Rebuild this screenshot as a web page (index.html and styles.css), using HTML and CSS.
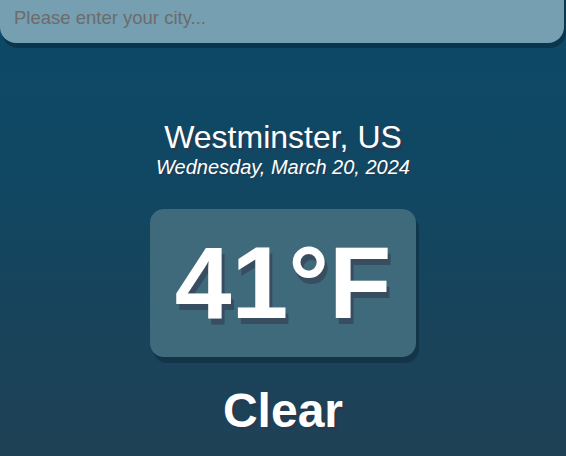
FILE: index.html
```html
<!DOCTYPE html>
<html lang="en">
<head>
<meta charset="utf-8">
<title>Weather</title>
<link rel="stylesheet" href="styles.css">
</head>
<body>
<main class="app">
  <div class="search-box">
    <input class="search-bar" type="text" placeholder="Please enter your city...">
  </div>
  <section class="location-box">
    <div class="location">Westminster, US</div>
    <div class="date">Wednesday, March 20, 2024</div>
  </section>
  <section class="weather-box">
    <div class="temp">41°F</div>
    <div class="weather">Clear</div>
  </section>
</main>
</body>
</html>
```
FILE: styles.css
```css
* { box-sizing: border-box; }
html, body {
  margin: 0;
  height: 100%;
}
body {
  font-family: "Liberation Sans", Arial, Helvetica, sans-serif;
  background: linear-gradient(to bottom, #0b4a68 0%, #114762 40%, #19435a 75%, #1f4155 100%);
  overflow: hidden;
}
.app {
  display: flex;
  flex-direction: column;
  min-height: 456px;
}
.search-box {
  display: flex;
}
.search-bar {
  display: block;
  width: calc(100% - 2px);
  height: 50px;
  margin-top: -7px;
  padding: 0 14px;
  appearance: none;
  border: none;
  outline: none;
  background-color: #769fb1;
  border-radius: 0 0 16px 16px;
  box-shadow: 2px 5px rgba(0, 0, 0, 0.25);
  color: #313131;
  font-family: "Liberation Sans", Arial, Helvetica, sans-serif;
  font-size: 18.5px;
}
.search-bar::placeholder {
  color: #6c6c6c;
  opacity: 1;
}
.location-box {
  margin-top: 76px;
  display: flex;
  flex-direction: column;
  align-items: center;
  color: #fff;
  text-align: center;
}
.location {
  font-size: 32px;
  font-weight: 400;
  text-shadow: 3px 3px rgba(50, 50, 70, 0.5);
}
.date {
  font-size: 20px;
  font-style: italic;
  text-shadow: 2px 2px rgba(50, 50, 70, 0.5);
}
.weather-box {
  display: flex;
  flex-direction: column;
  align-items: center;
  color: #fff;
}
.temp {
  margin-top: 30px;
  padding: 15px 25px;
  background-color: #3e6a7b;
  border-radius: 14px;
  font-size: 102px;
  font-weight: 900;
  line-height: 118px;
  text-shadow: 3px 6px rgba(50, 50, 70, 0.5);
  box-shadow: 3px 6px rgba(0, 0, 0, 0.2);
}
.weather {
  margin-top: 26px;
  font-size: 48px;
  font-weight: 700;
  text-shadow: 3px 3px rgba(50, 50, 70, 0.5);
}
```
